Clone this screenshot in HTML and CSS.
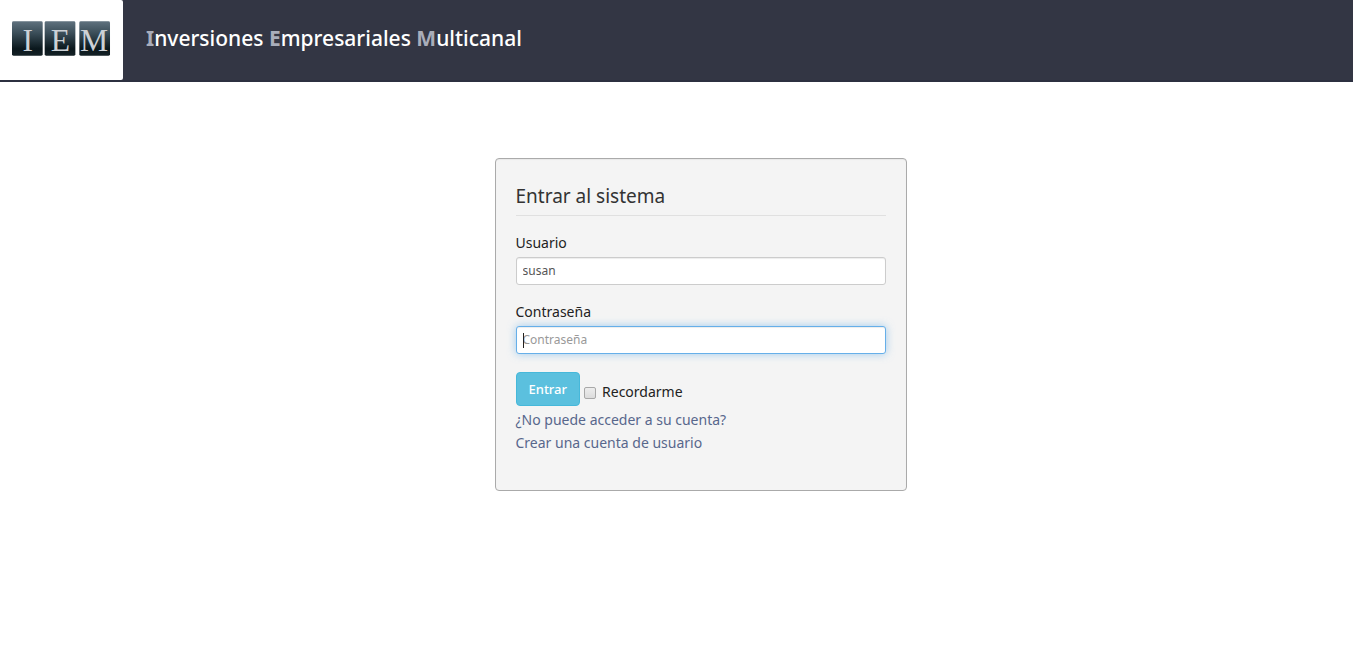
FILE: index.html
```html
<!DOCTYPE html>
<html lang="es">
<head>
<meta charset="utf-8">
<title>Inversiones Empresariales Multicanal</title>
<link rel="stylesheet" href="styles.css">
</head>
<body>
<header class="topbar">
  <a class="brand" href="#" aria-label="Inicio">
    <svg class="brand-logo" viewBox="0 0 100 37" aria-hidden="true">
      <defs>
        <linearGradient id="tile" x1="0" y1="0" x2="0" y2="1">
          <stop offset="0" stop-color="#60727f"/>
          <stop offset=".35" stop-color="#3a4d58"/>
          <stop offset=".8" stop-color="#0a171c"/>
          <stop offset="1" stop-color="#142126"/>
        </linearGradient>
        <linearGradient id="metal" x1="0" y1="0" x2="0" y2="1">
          <stop offset="0" stop-color="#f4f6f8"/>
          <stop offset=".5" stop-color="#b9c0c8"/>
          <stop offset="1" stop-color="#e6e9ec"/>
        </linearGradient>
      </defs>
      <rect x="0" y="1" width="31" height="35" rx="1.5" fill="url(#tile)"/>
      <rect x="33" y="1" width="31" height="35" rx="1.5" fill="url(#tile)"/>
      <rect x="68" y="1" width="31" height="35" rx="1.5" fill="url(#tile)"/>
      <g class="brand-letters" fill="#ccd1d6">
        <text x="16" y="31">I</text>
        <text x="49" y="31">E</text>
        <text x="83" y="31">M</text>
      </g>
    </svg>
  </a>
  <div class="title"><b>I</b>nversiones <b>E</b>mpresariales <b>M</b>ulticanal</div>
</header>
<main class="page">
  <form class="card">
    <h1 class="card-title">Entrar al sistema</h1>
    <div class="field">
      <label for="user">Usuario</label>
      <input class="text-input" id="user" type="text" value="susan">
    </div>
    <div class="field field-active">
      <label for="pass">Contraseña</label>
      <input class="text-input" id="pass" type="password" placeholder="Contraseña" autofocus>
    </div>
    <div class="actions">
      <button class="submit" type="submit">Entrar</button>
      <label class="remember"><input class="check" type="checkbox">Recordarme</label>
    </div>
    <div class="links">
      <a href="#">¿No puede acceder a su cuenta?</a>
      <a href="#">Crear una cuenta de usuario</a>
    </div>
  </form>
</main>
</body>
</html>
```
FILE: styles.css
```css
* { box-sizing: border-box; }
body {
  margin: 0;
  background: #fff;
  color: #222;
  font: 14px/23px "Droid Sans", "Noto Sans", sans-serif;
}
.topbar {
  display: flex;
  height: 82px;
  background: #333644;
  border-bottom: 2px solid #2c3040;
}
.brand {
  display: flex;
  width: 123px;
  padding: 20px 12px;
  background: #fff;
  border-radius: 0 2px 2px 0;
}
.brand-logo { width: 100px; height: 37px; }
.brand-letters {
  font: 32px "Liberation Serif", serif;
  text-anchor: middle;
}
.title {
  padding: 22px 23px;
  color: #fff;
  font-size: 21px;
  line-height: 32px;
  font-weight: 500;
}
.title b { color: #a9adba; }
.page {
  display: flex;
  justify-content: center;
  padding: 76px 0 40px 48px;
}
.card {
  width: 412px;
  padding: 21px 20px 36px;
  background: #f4f4f4;
  border: 1px solid #aaa;
  border-radius: 4px;
  box-shadow: inset 0 1px 1px rgba(0, 0, 0, .05);
}
.card-title {
  margin: 0 0 15px;
  padding-bottom: 3px;
  border-bottom: 1px solid #e0e0e0;
  color: #333;
  font-size: 19px;
  line-height: 32px;
  font-weight: 400;
}
.field { position: relative; margin-bottom: 15px; }
.field label { display: block; margin-bottom: 3px; }
.text-input {
  display: block;
  width: 100%;
  height: 28px;
  padding: 3px 6px 5px;
  border: 1px solid #ccc;
  border-radius: 3px;
  background: #fff;
  box-shadow: inset 0 1px 1px rgba(0, 0, 0, .075);
  color: #555;
  font: inherit;
  font-size: 12px;
  line-height: 18px;
  caret-color: transparent;
}
.text-input::placeholder { color: #999; opacity: 1; }
.text-input:focus {
  outline: 0;
  border-color: #66afe9;
  box-shadow: inset 0 1px 1px rgba(0, 0, 0, .075), 0 0 8px rgba(102, 175, 233, .6);
}
/* text caret of the active field */
.field-active::after {
  content: "";
  position: absolute;
  left: 7px;
  bottom: 6px;
  width: 1px;
  height: 15px;
  background: #222;
}
.actions {
  display: flex;
  align-items: flex-end;
  gap: 4px;
  padding-top: 3px;
}
.submit {
  height: 34px;
  padding: 0 12px;
  border: 1px solid #46b8da;
  border-radius: 4px;
  background: #5bc0de;
  color: #fff;
  font: inherit;
  font-size: 13px;
  font-weight: 500;
}
.remember {
  display: flex;
  align-items: center;
  gap: 6px;
  padding-bottom: 3px;
}
.check {
  appearance: none;
  width: 12px;
  height: 12px;
  margin: 2px 0 0;
  border: 1px solid #a8a8a8;
  border-radius: 2px;
  background: linear-gradient(#ededed, #dcdcdc);
}
.links {
  display: flex;
  flex-direction: column;
  align-items: flex-start;
  padding-top: 2px;
}
.links a { color: #58678c; text-decoration: none; }
```
